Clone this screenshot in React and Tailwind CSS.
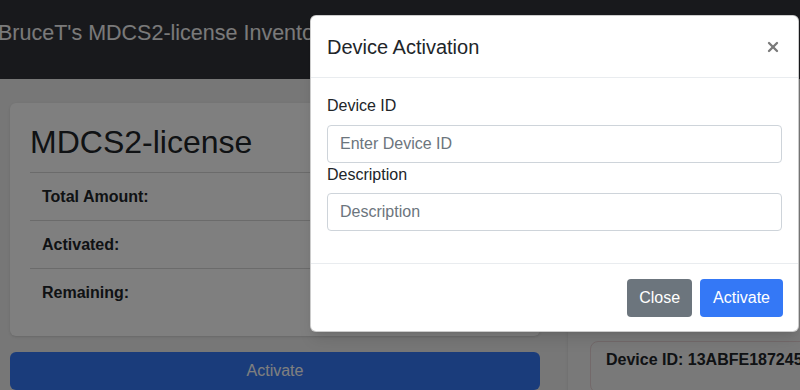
import { X } from "lucide-react";

const rows = ["Total Amount:", "Activated:", "Remaining:"];

const App = () => {
  return (
    <div
      className="relative w-[800px] h-[390px] overflow-hidden bg-[#eeeeee]"
      style={{ fontFamily: '"Liberation Sans", Arial, sans-serif' }}
    >
      {/* Navbar */}
      <div className="h-[79px] overflow-hidden bg-[#303238] pt-[21px]">
        <span className="ml-[-2px] block whitespace-nowrap text-[21.5px] leading-[24px] text-[#f4f4f4]">
          BruceT's MDCS2-license Inventory
        </span>
      </div>

      {/* Page content */}
      <div className="flex gap-[28px] pl-[10px] pt-[24px]">
        <div className="w-[530px] shrink-0">
          <div className="rounded-md bg-white p-[20px] shadow-sm">
            <h2 className="mb-[11px] text-[32px] leading-[38px] text-[#212529]">MDCS2-license</h2>
            <ul>
              {rows.map((r) => (
                <li
                  key={r}
                  className="flex h-[48px] items-center border-t border-[#d6d6d6] px-[12px] text-[16px] font-bold text-[#212529]"
                >
                  {r}
                </li>
              ))}
            </ul>
          </div>
          <button className="mt-[16px] h-[38px] w-full rounded-md bg-[#3478f6] text-[16px] text-white">
            Activate
          </button>
        </div>

        <div className="h-[300px] w-[232px] shrink-0 overflow-hidden rounded-l-md bg-[#f2f2f2] pl-[22px] pt-[238px] shadow-sm">
          <div className="w-[260px] rounded-lg border border-[#e6d2d4] px-[15px] pt-[6px] pb-[20px]">
            <p className="whitespace-nowrap text-[16px] font-bold leading-[24px] text-[#212529]">
              Device ID: 13ABFE187245
            </p>
          </div>
        </div>
      </div>

      {/* Backdrop */}
      <div className="absolute inset-0 bg-black/50" />

      {/* Modal */}
      <div className="absolute left-[310px] top-[15px] w-[489px] rounded-[6px] border border-black/20 bg-white shadow-lg">
        <div className="flex h-[62px] items-center justify-between border-b border-[#e9ecef] pl-[16px] pr-[17px]">
          <h5 className="text-[20px] font-medium leading-[30px] text-[#212529]">Device Activation</h5>
          <X size={16} strokeWidth={3.5} className="text-[#7a7a7a]" />
        </div>

        <div className="px-[16px] pt-[16px] pb-[32px]">
          <label className="mb-[7px] block text-[16px] leading-[24px] text-[#212529]">Device ID</label>
          <input
            placeholder="Enter Device ID"
            className="block h-[38px] w-full rounded-[4px] border border-[#ced4da] px-[12px] text-[16px] text-[#495057] outline-none placeholder:text-[#6c757d]"
          />
          <label className="mb-[6px] block text-[16px] leading-[24px] text-[#212529]">Description</label>
          <input
            placeholder="Description"
            className="block h-[38px] w-full rounded-[4px] border border-[#ced4da] px-[12px] text-[16px] text-[#495057] outline-none placeholder:text-[#6c757d]"
          />
        </div>

        <div className="flex justify-end gap-[8px] border-t border-[#e9ecef] px-[15px] pt-[15px] pb-[14px]">
          <button className="h-[38px] rounded-[4px] bg-[#6c757d] px-[12px] text-[16px] text-white">Close</button>
          <button className="h-[38px] rounded-[4px] bg-[#3478f6] px-[13px] text-[16px] text-white">Activate</button>
        </div>
      </div>
    </div>
  );
};

export default App;
